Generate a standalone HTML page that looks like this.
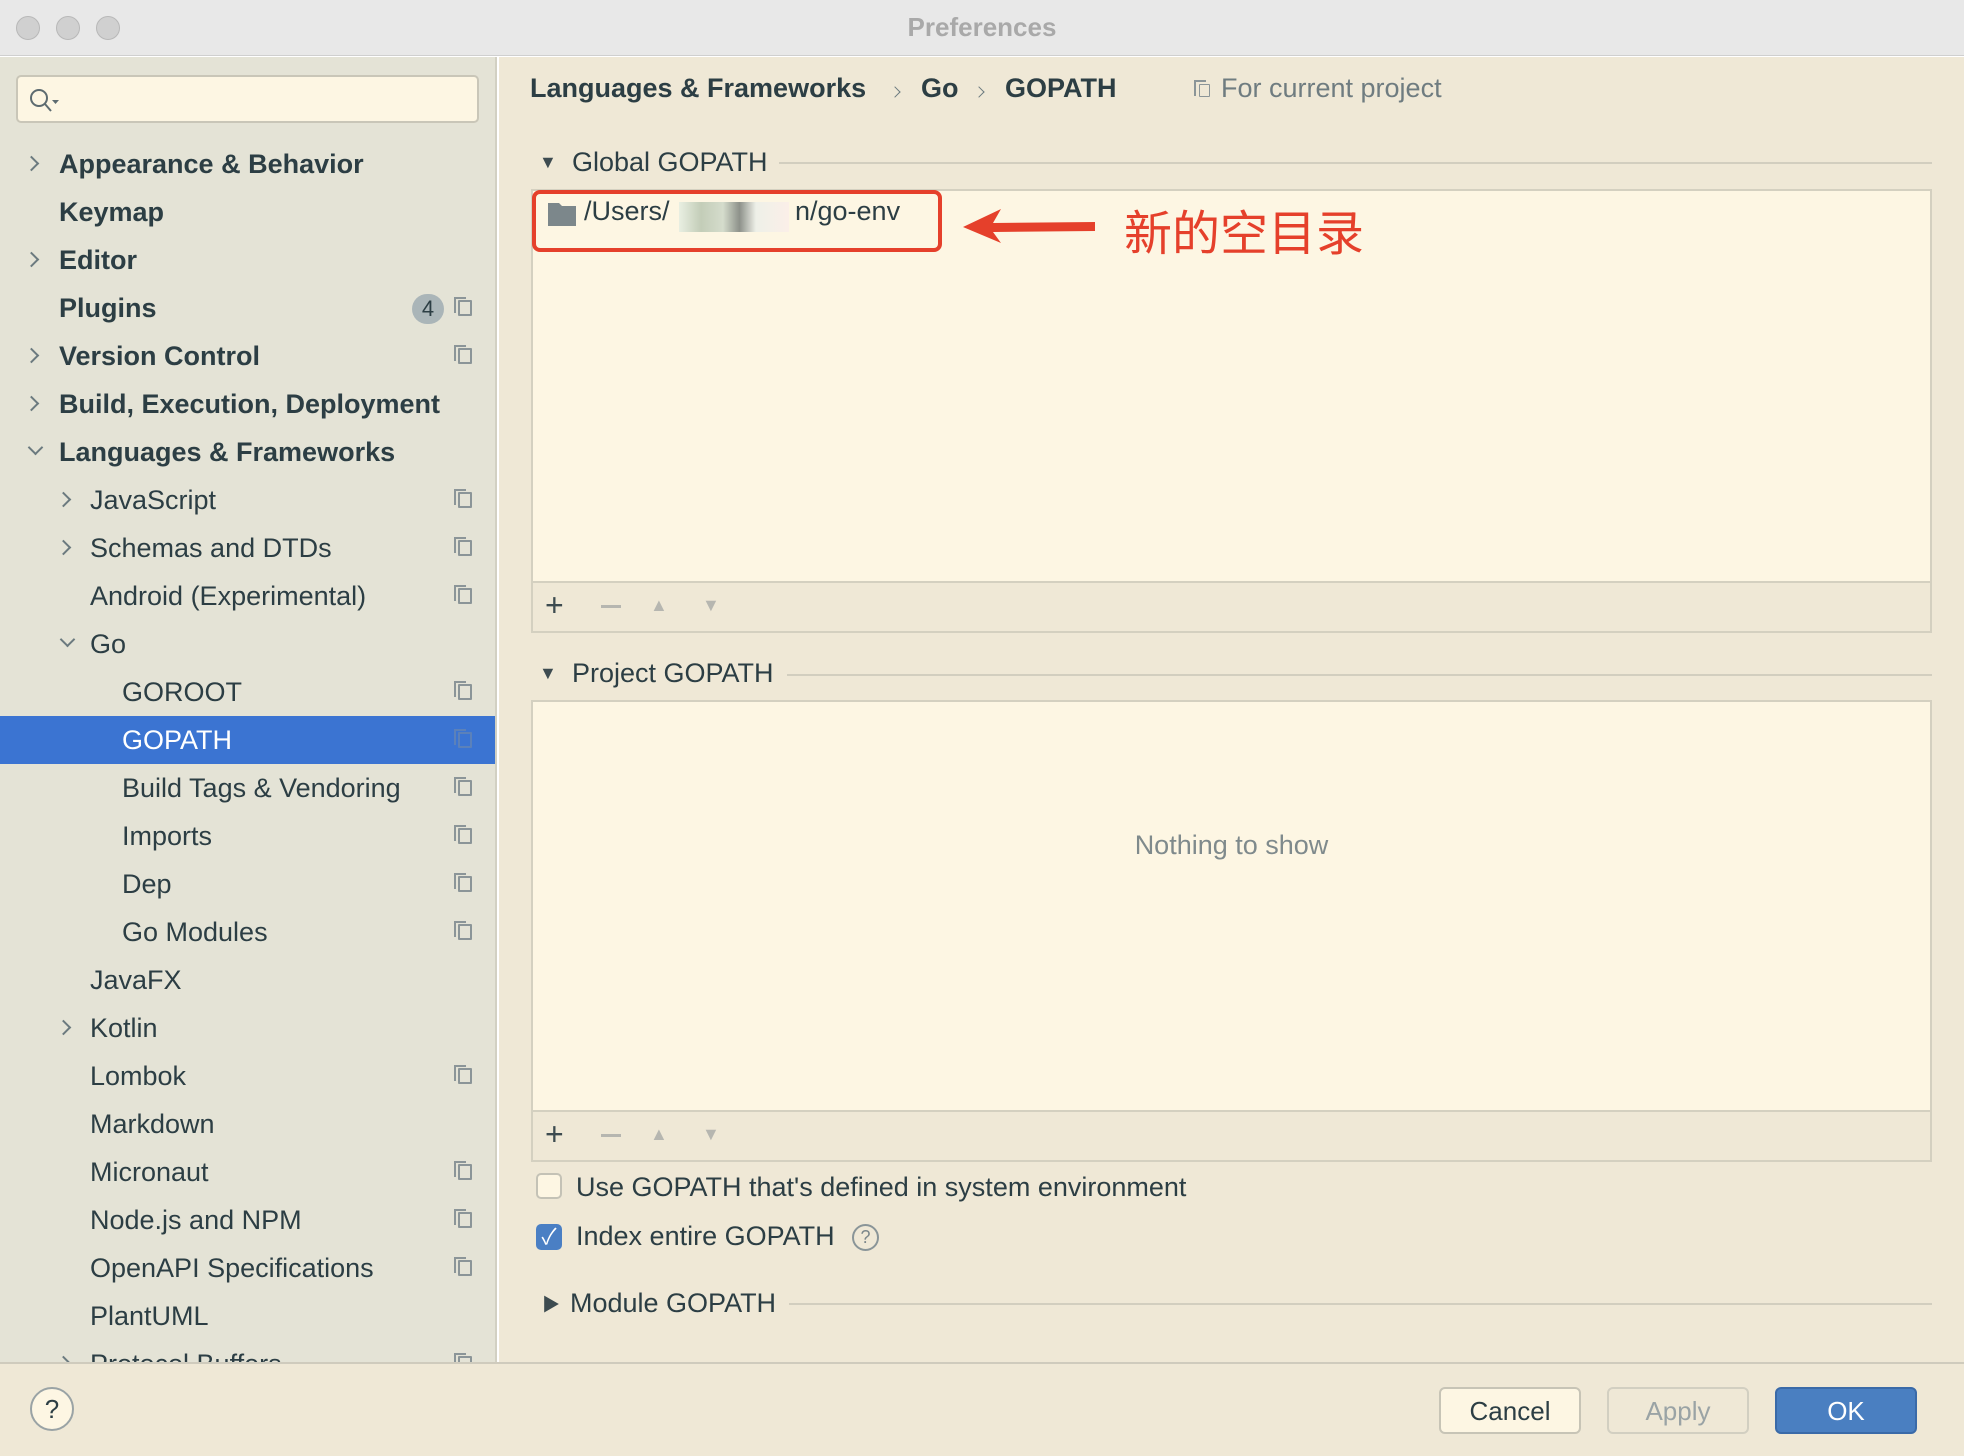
<!DOCTYPE html>
<html><head><meta charset="utf-8">
<style>
*{margin:0;padding:0;box-sizing:border-box}
body{width:1964px;height:1456px;background:#fff;font-family:"Liberation Sans","Noto Sans CJK SC",sans-serif;color:#2c3e44;overflow:hidden;position:relative}
.a{position:absolute;white-space:nowrap}
#title{left:0;top:0;width:1964px;height:56px;background:#e8e8e8;border-bottom:1px solid #cfcfcf}
.dot{position:absolute;top:16px;width:24px;height:24px;border-radius:50%;background:#d0d0d0;border:1px solid #b8b8b8}
#side{left:0;top:57px;width:497px;height:1305px;background:#e4e3d6;border-right:2px solid #d2d0c2;overflow:hidden}
#main{left:499px;top:57px;width:1465px;height:1305px;background:#efe8d6}
#foot{left:0;top:1362px;width:1964px;height:94px;background:#efe8d6;border-top:2px solid #cfcbbd}
.row{position:absolute;left:0;width:495px;height:48px;line-height:48px;font-size:27px}
.b{font-weight:bold}
.chev{position:absolute;top:18px;width:11px;height:11px;border-right:2px solid #6b7a7f;border-bottom:2px solid #6b7a7f;transform:rotate(-45deg)}
.chev.d{transform:rotate(45deg);top:14px}
.cp{position:absolute;left:458px;top:16px;width:14px;height:16px;border:2px solid #8b9598;border-radius:1px}
.cp:after{content:"";position:absolute;left:-6px;top:-5px;width:10px;height:14px;border-left:2px solid #8b9598;border-top:2px solid #8b9598}
.panel{position:absolute;background:#fdf6e3;border:2px solid #d4d0c0}
.tb{position:absolute;left:0;right:0;bottom:0;height:50px;background:#efe8d6;border-top:2px solid #d4d0c0}
.btn{position:absolute;top:1387px;width:142px;height:47px;border-radius:6px;font-size:26px;text-align:center;line-height:45px}
.f{font-size:27px}
</style></head><body>
<div id="title" class="a">
 <div class="dot" style="left:16px"></div><div class="dot" style="left:56px"></div><div class="dot" style="left:96px"></div>
 <div class="a" style="left:0;width:1964px;text-align:center;top:12px;font-size:26px;font-weight:bold;color:#a9a9a9">Preferences</div>
</div>
<div id="side" class="a">
 <div class="a" style="left:16px;top:18px;width:463px;height:48px;background:#fdf6e3;border:2px solid #c9c6b8;border-radius:5px">
  <svg class="a" style="left:10px;top:10px" width="36" height="28"><circle cx="11" cy="11" r="8" fill="none" stroke="#5d6b70" stroke-width="2"/><line x1="17" y1="17" x2="23" y2="24" stroke="#5d6b70" stroke-width="2"/><path d="M24 13l7 0-3.5 4z" fill="#5d6b70"/></svg>
 </div>
 <div style="position:absolute;left:0;top:83px">
 <div class="row" style="top:0"><span class="chev" style="left:26px"></span><span class="a b" style="left:59px">Appearance &amp; Behavior</span></div>
 <div class="row" style="top:48px"><span class="a b" style="left:59px">Keymap</span></div>
 <div class="row" style="top:96px"><span class="chev" style="left:26px"></span><span class="a b" style="left:59px">Editor</span></div>
 <div class="row" style="top:144px"><span class="a b" style="left:59px">Plugins</span><span class="a" style="left:412px;top:10px;width:32px;height:30px;border-radius:15px;background:#aab5b8;line-height:30px;text-align:center;font-size:22px">4</span><span class="cp"></span></div>
 <div class="row" style="top:192px"><span class="chev" style="left:26px"></span><span class="a b" style="left:59px">Version Control</span><span class="cp"></span></div>
 <div class="row" style="top:240px"><span class="chev" style="left:26px"></span><span class="a b" style="left:59px">Build, Execution, Deployment</span></div>
 <div class="row" style="top:288px"><span class="chev d" style="left:30px"></span><span class="a b" style="left:59px">Languages &amp; Frameworks</span></div>
 <div class="row" style="top:336px"><span class="chev" style="left:58px"></span><span class="a" style="left:90px">JavaScript</span><span class="cp"></span></div>
 <div class="row" style="top:384px"><span class="chev" style="left:58px"></span><span class="a" style="left:90px">Schemas and DTDs</span><span class="cp"></span></div>
 <div class="row" style="top:432px"><span class="a" style="left:90px">Android (Experimental)</span><span class="cp"></span></div>
 <div class="row" style="top:480px"><span class="chev d" style="left:62px"></span><span class="a" style="left:90px">Go</span></div>
 <div class="row" style="top:528px"><span class="a" style="left:122px">GOROOT</span><span class="cp"></span></div>
 <div class="row" style="top:576px;background:#3b74d2;color:#fff"><span class="a" style="left:122px">GOPATH</span><span class="cp" style="opacity:.4"></span></div>
 <div class="row" style="top:624px"><span class="a" style="left:122px">Build Tags &amp; Vendoring</span><span class="cp"></span></div>
 <div class="row" style="top:672px"><span class="a" style="left:122px">Imports</span><span class="cp"></span></div>
 <div class="row" style="top:720px"><span class="a" style="left:122px">Dep</span><span class="cp"></span></div>
 <div class="row" style="top:768px"><span class="a" style="left:122px">Go Modules</span><span class="cp"></span></div>
 <div class="row" style="top:816px"><span class="a" style="left:90px">JavaFX</span></div>
 <div class="row" style="top:864px"><span class="chev" style="left:58px"></span><span class="a" style="left:90px">Kotlin</span></div>
 <div class="row" style="top:912px"><span class="a" style="left:90px">Lombok</span><span class="cp"></span></div>
 <div class="row" style="top:960px"><span class="a" style="left:90px">Markdown</span></div>
 <div class="row" style="top:1008px"><span class="a" style="left:90px">Micronaut</span><span class="cp"></span></div>
 <div class="row" style="top:1056px"><span class="a" style="left:90px">Node.js and NPM</span><span class="cp"></span></div>
 <div class="row" style="top:1104px"><span class="a" style="left:90px">OpenAPI Specifications</span><span class="cp"></span></div>
 <div class="row" style="top:1152px"><span class="a" style="left:90px">PlantUML</span></div>
 <div class="row" style="top:1200px"><span class="chev" style="left:58px"></span><span class="a" style="left:90px">Protocol Buffers</span><span class="cp"></span></div>
 </div>
</div>
<div id="main" class="a">
 <div class="a b f" style="left:31px;top:16px">Languages &amp; Frameworks</div>
 <span class="chev" style="left:392px;top:31px;width:8px;height:8px;border-width:1.5px"></span>
 <div class="a b f" style="left:422px;top:16px">Go</div>
 <span class="chev" style="left:476px;top:31px;width:8px;height:8px;border-width:1.5px"></span>
 <div class="a b f" style="left:506px;top:16px">GOPATH</div>
 <span class="cp" style="left:700px;top:27px;width:11px;height:13px;border-width:1.5px"></span>
 <div class="a f" style="left:722px;top:16px;color:#6f7c80">For current project</div>

 <div class="a" style="left:40px;top:95px;font-size:18px;color:#3d4b50">&#9660;</div>
 <div class="a f" style="left:73px;top:90px">Global GOPATH</div>
 <div class="a" style="left:280px;top:105px;width:1153px;height:2px;background:#d2cebf"></div>
 <div class="panel" style="left:32px;top:132px;width:1401px;height:444px">
  <div class="tb"><span class="a" style="left:12px;top:4px;font-size:32px;color:#3d4b50">+</span><span class="a" style="left:68px;top:22px;width:20px;height:3px;background:#b6b6b0"></span><span class="a" style="left:117px;top:12px;font-size:18px;color:#b6b6b0">&#9650;</span><span class="a" style="left:169px;top:12px;font-size:18px;color:#b6b6b0">&#9660;</span></div>
 </div>
 <div class="a" style="left:33px;top:133px;width:410px;height:62px;border:4px solid #e5402b;border-radius:8px"></div>
 <svg class="a" style="left:48px;top:144px" width="30" height="26"><path d="M1 2h11l3 3h14v20H1z" fill="#7c878b"/></svg>
 <div class="a f" style="left:85px;top:139px">/Users/</div>
 <div class="a" style="left:180px;top:145px;width:110px;height:30px;background:linear-gradient(90deg,#e9efe2,#c3cdb8 20%,#d5dccc 40%,#8d918a 55%,#eef0e8 70%,#fbefe8)"></div>
 <div class="a f" style="left:296px;top:139px">n/go-env</div>
 <svg class="a" style="left:462px;top:148px" width="136" height="40"><path d="M2 22L40 4 32 18 134 17 134 26 32 27 40 38z" fill="#e5402b"/></svg>
 <div class="a" style="left:625px;top:137px;font-size:48px;color:#e5402b;font-family:'Noto Sans CJK SC',sans-serif">新的空目录</div>

 <div class="a" style="left:40px;top:606px;font-size:18px;color:#3d4b50">&#9660;</div>
 <div class="a f" style="left:73px;top:601px">Project GOPATH</div>
 <div class="a" style="left:288px;top:617px;width:1145px;height:2px;background:#d2cebf"></div>
 <div class="panel" style="left:32px;top:643px;width:1401px;height:462px">
  <div class="a f" style="left:0;width:1397px;text-align:center;top:128px;color:#7f8a8c">Nothing to show</div>
  <div class="tb"><span class="a" style="left:12px;top:4px;font-size:32px;color:#3d4b50">+</span><span class="a" style="left:68px;top:22px;width:20px;height:3px;background:#b6b6b0"></span><span class="a" style="left:117px;top:12px;font-size:18px;color:#b6b6b0">&#9650;</span><span class="a" style="left:169px;top:12px;font-size:18px;color:#b6b6b0">&#9660;</span></div>
 </div>
 <div class="a" style="left:37px;top:1116px;width:26px;height:26px;border:2px solid #c4c2b6;border-radius:5px;background:#fdf6e3"></div>
 <div class="a f" style="left:77px;top:1115px">Use GOPATH that's defined in system environment</div>
 <div class="a" style="left:37px;top:1167px;width:26px;height:26px;border-radius:5px;background:#4a7fc4;color:#fff;font-size:22px;line-height:26px;text-align:center">&#10003;</div>
 <div class="a f" style="left:77px;top:1164px">Index entire GOPATH</div>
 <div class="a" style="left:353px;top:1167px;width:27px;height:27px;border:2px solid #8a9598;border-radius:50%;font-size:18px;line-height:23px;text-align:center;color:#7a868a">?</div>
 <div class="a" style="left:43px;top:1234px;font-size:18px;color:#3d4b50">&#9654;</div>
 <div class="a f" style="left:71px;top:1231px">Module GOPATH</div>
 <div class="a" style="left:290px;top:1246px;width:1143px;height:2px;background:#d2cebf"></div>
</div>
<div id="foot" class="a"></div>
<div class="a" style="left:30px;top:1387px;width:44px;height:44px;border:2px solid #9aa3a5;border-radius:50%;background:#fdf6e3;text-align:center;line-height:40px;font-size:26px">?</div>
<div class="btn" style="left:1439px;background:#fdf6e3;border:2px solid #c7c4b6">Cancel</div>
<div class="btn" style="left:1607px;background:#efe8d6;border:2px solid #d2cfc1;color:#9aa3a5">Apply</div>
<div class="btn" style="left:1775px;background:#4a7fc1;border:2px solid #3a6aa8;color:#fff">OK</div>
</body></html>
